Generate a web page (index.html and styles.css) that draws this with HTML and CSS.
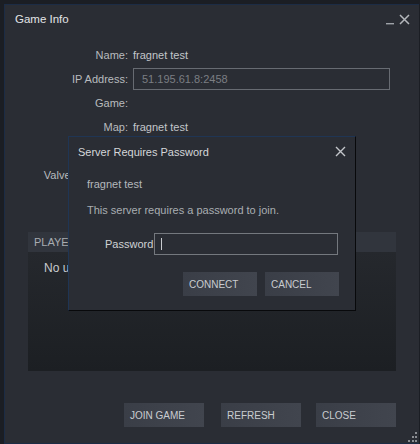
FILE: index.html
```html
<!DOCTYPE html>
<html>
<head>
<meta charset="utf-8">
<link rel="stylesheet" href="styles.css">
</head>
<body>
<div class="window">
  <div class="titlebar">
    <span class="title">Game Info</span>
    <div class="winctrls">
      <svg class="min" width="9" height="10" viewBox="0 0 9 10"><rect x="0" y="8" width="8" height="1.4" fill="#9ea2a8"/></svg>
      <svg class="x" width="11" height="11" viewBox="0 0 11 11"><path d="M1 1L10 10M10 1L1 10" stroke="#b4b7bc" stroke-width="1.5"/></svg>
    </div>
  </div>
  <div class="info">
    <span class="lbl">Name:</span><span class="val">fragnet test</span>
    <span class="lbl">IP Address:</span><span class="val"><span class="ipbox">51.195.61.8:2458</span></span>
    <span class="lbl">Game:</span><span class="val"></span>
    <span class="lbl">Map:</span><span class="val">fragnet test</span>
    <span class="lbl"></span><span class="val"></span>
    <span class="lbl">Valve Anti-Cheat:</span><span class="val"></span>
    <span class="lbl"></span><span class="val"></span>
  </div>
  <div class="players">
    <div class="phead">PLAYER NAME</div>
    <div class="pbody">No users currently on this server</div>
  </div>
  <div class="actions">
    <button class="btn w80">JOIN GAME</button>
    <button class="btn w80 ml17">REFRESH</button>
    <button class="btn w80 ml15">CLOSE</button>
  </div>
  <svg class="grip" width="12" height="12" viewBox="0 0 12 12">
    <rect x="9" y="1" width="2" height="2" fill="#8a8d92"/>
    <rect x="6" y="5" width="2" height="2" fill="#8a8d92"/>
    <rect x="9" y="5" width="2" height="2" fill="#8a8d92"/>
    <rect x="2" y="9" width="2" height="2" fill="#8a8d92"/>
    <rect x="6" y="9" width="2" height="2" fill="#8a8d92"/>
    <rect x="9" y="9" width="2" height="2" fill="#8a8d92"/>
  </svg>

  <div class="dialog">
    <div class="dtitlebar">
      <span class="dtitle">Server Requires Password</span>
      <svg class="dx" width="11" height="11" viewBox="0 0 11 11"><path d="M1 1L10 10M10 1L1 10" stroke="#c3c6ca" stroke-width="1.4"/></svg>
    </div>
    <div class="dbody">
      <div class="dname">fragnet test</div>
      <div class="dmsg">This server requires a password to join.</div>
      <div class="pwrow">
        <span class="pwlbl">Password</span>
        <span class="pwbox"><span class="caret"></span></span>
      </div>
      <div class="dactions">
        <button class="btn w74">CONNECT</button>
        <button class="btn w74 ml8">CANCEL</button>
      </div>
    </div>
  </div>
</div>
</body>
</html>
```
FILE: styles.css
```css
html, body {
  margin: 0;
  padding: 0;
  background: #1b1e24;
  width: 420px;
  height: 444px;
  overflow: hidden;
}
body {
  font-family: "Liberation Sans", Arial, sans-serif;
  font-size: 11px;
  color: #b9bcc0;
}
.window {
  position: relative;
  margin: 4px 0 0 4px;
  width: 415px;
  height: 440px;
  box-sizing: border-box;
  border-top: 1px solid #1c2c45;
  border-left: 1px solid #1c2c45;
  border-bottom: 1px solid #1c2c45;
  background: #2a2d34;
}
.titlebar {
  height: 28px;
  display: flex;
  align-items: center;
  justify-content: space-between;
  padding: 0 9px 0 10px;
}
.title {
  color: #e2e4e6;
  font-size: 11.5px;
}
.winctrls {
  display: flex;
  align-items: center;
  gap: 4px;
}
.winctrls .min { margin-top: 2px; }
.info {
  display: grid;
  grid-template-columns: 123px 1fr;
  grid-auto-rows: 24px;
  column-gap: 5px;
  margin-top: 10px;
  padding-right: 28px;
}
.lbl {
  text-align: right;
  line-height: 24px;
  color: #b8bbbf;
}
.val {
  line-height: 24px;
  color: #c3c6ca;
  display: flex;
  align-items: center;
}
.ipbox {
  box-sizing: border-box;
  width: 257px;
  height: 22px;
  border: 1px solid #676b72;
  padding-left: 8px;
  line-height: 20px;
  color: #7b7e83;
}
.players {
  margin: 21px 23px 0 23px;
  height: 139px;
  display: flex;
  flex-direction: column;
}
.phead {
  height: 20px;
  line-height: 20px;
  background: #31353d;
  padding-left: 6px;
  color: #a8acb1;
  font-size: 11px;
}
.pbody {
  flex: 1;
  background: linear-gradient(#25282d, #1c1f23);
  padding: 9px 0 0 16px;
  font-size: 12px;
  color: #c8cbcf;
}
.actions {
  display: flex;
  justify-content: flex-end;
  margin-top: 32px;
  padding-right: 23px;
}
.btn {
  height: 24px;
  border: none;
  background: linear-gradient(90deg, #3a3e47, #41454e);
  color: #c9ccd0;
  font-family: "Liberation Sans", Arial, sans-serif;
  font-size: 10px;
  text-align: left;
  padding: 1px 0 0 6px;
  margin: 0;
}
.w80 { width: 80px; }
.w74 { width: 74px; }
.ml17 { margin-left: 17px; }
.ml15 { margin-left: 15px; }
.ml8 { margin-left: 8px; }
.grip {
  position: absolute;
  right: 1px;
  bottom: 0;
}
.dialog {
  position: absolute;
  left: 63px;
  top: 131px;
  width: 288px;
  height: 175px;
  box-sizing: border-box;
  background: #2a2d34;
  border-top: 1px solid #1f3554;
  border-left: 1px solid #1f3554;
  border-right: 1px solid #08090b;
  border-bottom: 1px solid #08090b;
}
.dtitlebar {
  height: 29px;
  display: flex;
  align-items: center;
  justify-content: space-between;
  padding: 0 9px 0 9px;
}
.dtitle {
  color: #d4d6d9;
  font-size: 11px;
}
.dbody {
  padding: 0 16px 0 18px;
}
.dname {
  margin-top: 10px;
  line-height: 16px;
  color: #b4b8bc;
}
.dmsg {
  margin-top: 10px;
  line-height: 16px;
  color: #a9adb2;
}
.pwrow {
  display: flex;
  align-items: center;
  margin-top: 15px;
  padding-left: 18px;
}
.pwlbl {
  color: #cfd2d5;
  margin-right: 1px;
}
.pwbox {
  box-sizing: border-box;
  width: 184px;
  height: 22px;
  border: 1px solid #74787e;
  display: flex;
  align-items: center;
  padding-left: 6px;
}
.caret {
  width: 1px;
  height: 12px;
  background: #c8cbcf;
}
.dactions {
  display: flex;
  justify-content: flex-end;
  margin-top: 17px;
}
```
